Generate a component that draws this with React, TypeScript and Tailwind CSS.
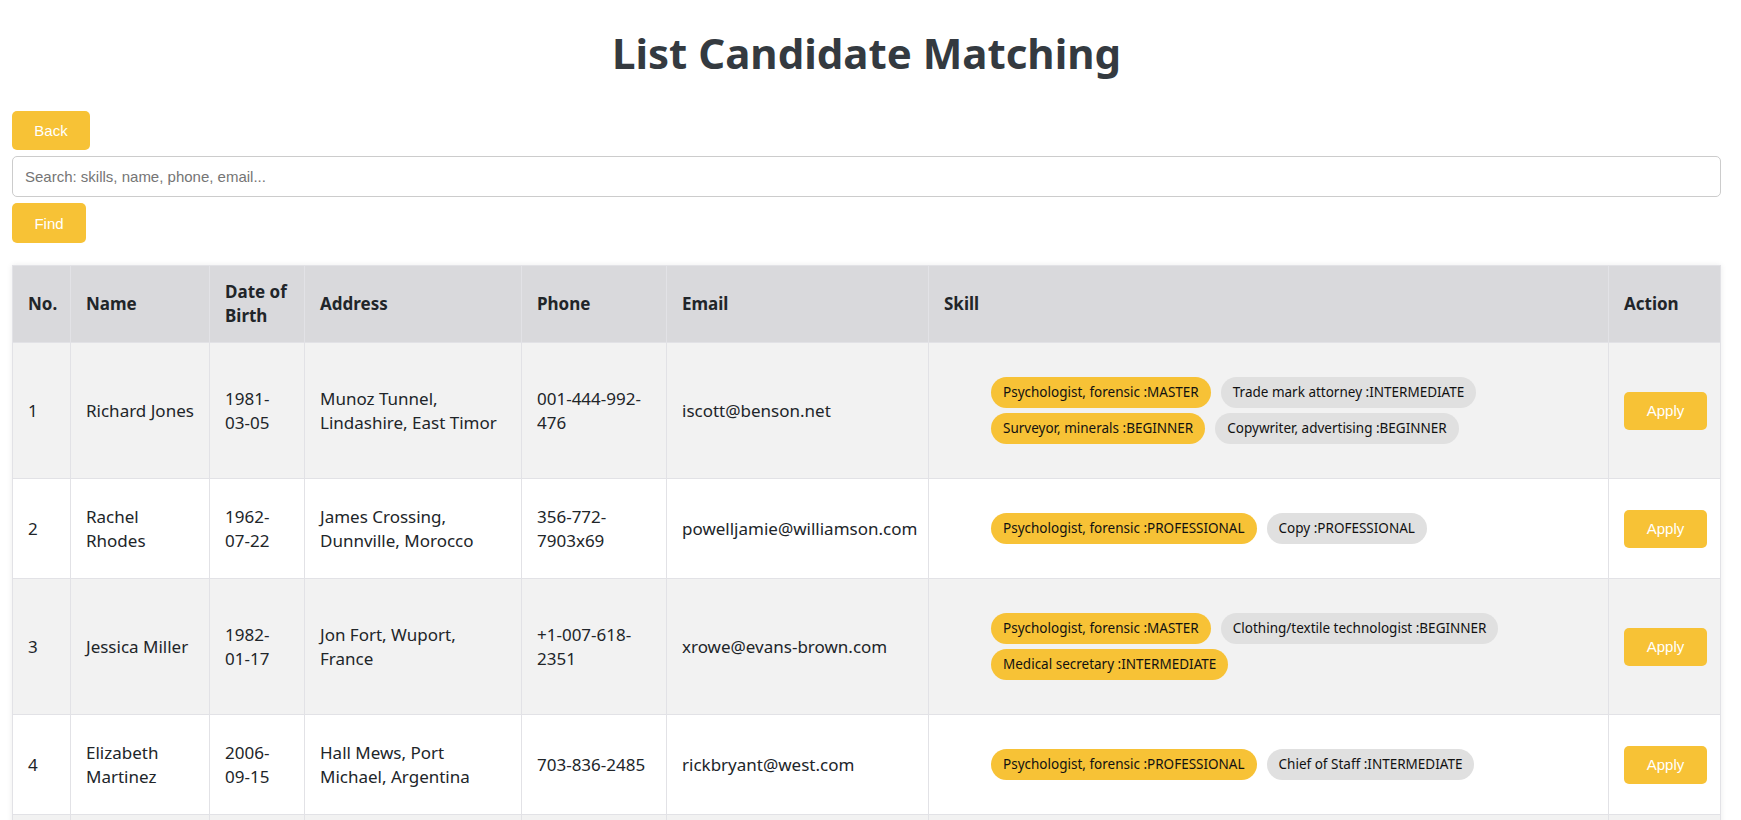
import React from "react";

type Skill = { label: string; hit: boolean };
type Row = {
  no: number;
  name: string;
  dob: string;
  address: string;
  phone: string;
  email: string;
  skills: Skill[];
};

const rows: Row[] = [
  {
    no: 1,
    name: "Richard Jones",
    dob: "1981-03-05",
    address: "Munoz Tunnel, Lindashire, East Timor",
    phone: "001-444-992-476",
    email: "iscott@benson.net",
    skills: [
      { label: "Psychologist, forensic :MASTER", hit: true },
      { label: "Trade mark attorney :INTERMEDIATE", hit: false },
      { label: "Surveyor, minerals :BEGINNER", hit: true },
      { label: "Copywriter, advertising :BEGINNER", hit: false },
    ],
  },
  {
    no: 2,
    name: "Rachel Rhodes",
    dob: "1962-07-22",
    address: "James Crossing, Dunnville, Morocco",
    phone: "356-772-7903x69",
    email: "powelljamie@williamson.com",
    skills: [
      { label: "Psychologist, forensic :PROFESSIONAL", hit: true },
      { label: "Copy :PROFESSIONAL", hit: false },
    ],
  },
  {
    no: 3,
    name: "Jessica Miller",
    dob: "1982-01-17",
    address: "Jon Fort, Wuport, France",
    phone: "+1-007-618-2351",
    email: "xrowe@evans-brown.com",
    skills: [
      { label: "Psychologist, forensic :MASTER", hit: true },
      { label: "Clothing/textile technologist :BEGINNER", hit: false },
      { label: "Medical secretary :INTERMEDIATE", hit: true },
    ],
  },
  {
    no: 4,
    name: "Elizabeth Martinez",
    dob: "2006-09-15",
    address: "Hall Mews, Port Michael, Argentina",
    phone: "703-836-2485",
    email: "rickbryant@west.com",
    skills: [
      { label: "Psychologist, forensic :PROFESSIONAL", hit: true },
      { label: "Chief of Staff :INTERMEDIATE", hit: false },
    ],
  },
  {
    no: 5,
    name: "Michael Brown",
    dob: "1975-11-02",
    address: "Lee Station, Davidview, Chile",
    phone: "(412)555-0199",
    email: "mbrown@garcia.org",
    skills: [
      { label: "Psychologist, forensic :BEGINNER", hit: true },
      { label: "Editor, film/video :MASTER", hit: false },
    ],
  },
];

const btn =
  "bg-[#f7c236] text-white text-[15px] leading-[17px] rounded-[5px] [font-family:'Liberation_Sans',Arial,sans-serif]";

export default function App() {
  return (
    <div className="min-h-screen bg-white pl-[12px] pr-[20px] pb-10 text-[#212529] [font-family:'Noto_Sans',sans-serif]">
      <h1 className="mt-[29px] text-center text-[42px] leading-[48px] font-bold text-[#343a40]">
        List Candidate Matching
      </h1>
      <div className="mt-[34px] flex flex-col items-start gap-[6px]">
        <button className={`${btn} h-[39px] w-[78px]`}>Back</button>
        <input
          className="h-[41px] w-full rounded-[5px] border border-[#cccccc] px-[12px] text-[15px] outline-none placeholder:text-[#757575] [font-family:'Liberation_Sans',Arial,sans-serif]"
          placeholder="Search: skills, name, phone, email..."
        />
        <button className={`${btn} h-[40px] w-[74px]`}>Find</button>
      </div>
      <table className="mt-[22px] w-full table-fixed border-collapse text-[17px] leading-6 shadow-[0_0_6px_rgba(0,0,0,0.08)]">
        <colgroup>
          <col className="w-[58px]" />
          <col className="w-[139px]" />
          <col className="w-[95px]" />
          <col className="w-[217px]" />
          <col className="w-[145px]" />
          <col className="w-[262px]" />
          <col />
          <col className="w-[112px]" />
        </colgroup>
        <thead>
          <tr className="bg-[#d9d9dc]">
            {["No.", "Name", "Date of Birth", "Address", "Phone", "Email", "Skill", "Action"].map((h) => (
              <th
                key={h}
                className="border border-[#e2e2e6] px-[15px] py-[14px] text-left align-middle font-bold"
              >
                {h}
              </th>
            ))}
          </tr>
        </thead>
        <tbody>
          {rows.map((r, i) => (
            <tr key={r.no} className={i % 2 === 0 ? "bg-[#f2f2f2]" : "bg-white"}>
              <td className="border border-[#e2e2e6] px-[15px] py-4 align-middle">{r.no}</td>
              <td className="border border-[#e2e2e6] px-[15px] py-4 align-middle">{r.name}</td>
              <td className="border border-[#e2e2e6] px-[15px] py-4 align-middle">{r.dob}</td>
              <td className="border border-[#e2e2e6] px-[15px] py-4 align-middle">{r.address}</td>
              <td className="border border-[#e2e2e6] px-[15px] py-4 align-middle">{r.phone}</td>
              <td className="border border-[#e2e2e6] px-[15px] py-4 align-middle">{r.email}</td>
              <td className="border border-[#e2e2e6] px-[15px] py-4 align-middle">
                <ul className="flex flex-wrap gap-x-[10px] gap-y-[5px] py-[18px] pl-[47px]">
                  {r.skills.map((s) => (
                    <li
                      key={s.label}
                      className={`rounded-full px-[12px] py-[5px] text-[13.5px] leading-[21px] text-[#111] ${
                        s.hit ? "bg-[#f7c236]" : "bg-[#e0e0e0]"
                      }`}
                    >
                      {s.label}
                    </li>
                  ))}
                </ul>
              </td>
              <td className="border border-[#e2e2e6] px-[15px] py-4 align-middle">
                <button className={`${btn} h-[38px] w-[83px]`}>Apply</button>
              </td>
            </tr>
          ))}
        </tbody>
      </table>
    </div>
  );
}
